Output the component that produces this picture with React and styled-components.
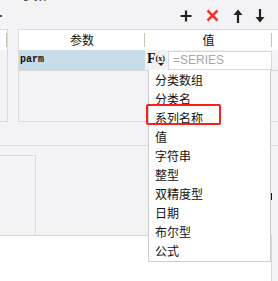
import React from "react";
import styled, { createGlobalStyle } from "styled-components";

const GlobalStyle = createGlobalStyle`
  html, body {
    margin: 0;
    padding: 0;
    background: #f3f3f5;
    font-family: "Noto Sans CJK SC", "Noto Sans", sans-serif;
  }
`;

const Page = styled.div`
  position: relative;
  width: 278px;
  height: 281px;
  overflow: hidden;
  background: #f3f3f5;
  display: flex;
  flex-direction: column;
`;

const TopBar = styled.div`
  height: 29px;
  flex: none;
  display: flex;
  align-items: flex-start;
`;

const EdgeMark = styled.span`
  width: 2px;
  height: 2px;
  margin-top: 15px;
  background: #555;
`;

const CutTitle = styled.span`
  margin: -12px 0 0 20px;
  font-size: 12px;
  line-height: 14px;
  color: #111;
`;

const Toolbar = styled.div`
  margin-left: auto;
  align-self: center;
  display: flex;
  gap: 4px;
  padding: 2px 7px 0 0;
`;

const ToolButton = styled.button`
  width: 22px;
  height: 18px;
  margin-left: ${(p) => (p.$tight ? "-4px" : "0")};
  padding: 0;
  border: none;
  background: transparent;
  display: flex;
  align-items: center;
  justify-content: center;
`;

const TablesRow = styled.div`
  display: flex;
  gap: 10px;
  height: 93px;
  flex: none;
`;

const SideTable = styled.div`
  width: 8px;
  box-sizing: border-box;
  border: 1px solid #dadada;
  border-left: none;
  display: flex;
  flex-direction: column;
`;

const HeaderStrip = styled.div`
  height: 20px;
  background: #fff;
  display: flex;
`;

const HeaderCell = styled.div`
  position: relative;
  width: ${(p) => p.$w}px;
  flex: none;
  font-size: 12px;
  line-height: 20px;
  text-align: center;
  color: #111;
  &::after {
    content: "";
    position: absolute;
    right: 0;
    top: 3px;
    bottom: 3px;
    width: 1px;
    background: #c9c2b4;
  }
`;

const ParamTable = styled.div`
  width: 280px;
  flex: none;
  box-sizing: border-box;
  border: 1px solid #dadada;
  border-right: none;
  display: flex;
  flex-direction: column;
`;

const DataRow = styled.div`
  height: 20px;
  display: flex;
  border-bottom: 1px solid #d6d6d6;
`;

const NameCell = styled.div`
  width: 126px;
  flex: none;
  background: #c8dbe8;
  font-family: "Liberation Mono", "DejaVu Sans Mono", monospace;
  font-size: 10px;
  font-weight: bold;
  line-height: 20px;
  padding-left: 1px;
  box-sizing: border-box;
  color: #111;
`;

const ValueCell = styled.div`
  width: 127px;
  flex: none;
  display: flex;
  align-items: center;
  background: #f2f2f3;
`;

const FxButton = styled.div`
  position: relative;
  width: 23px;
  height: 20px;
  flex: none;
  display: flex;
  align-items: flex-start;
  padding: 1px 0 0 2px;
  box-sizing: border-box;
  font-family: "Liberation Serif", serif;
  color: #111;
  b {
    font-size: 14px;
    line-height: 15px;
  }
  span {
    font-size: 8px;
    line-height: 15px;
    font-weight: bold;
  }
  &::after {
    content: "";
    position: absolute;
    left: 13px;
    bottom: 1px;
    border: 3px solid transparent;
    border-top: 3px solid #222;
  }
`;

const FormulaInput = styled.input`
  width: 104px;
  height: 19px;
  box-sizing: border-box;
  border: 1px solid #d8d8d8;
  background: #fff;
  padding: 0 4px;
  font-family: "Liberation Sans", Arial, sans-serif;
  font-size: 12px;
  outline: none;
  &::placeholder {
    color: #a8a8a8;
  }
`;

const LowerSection = styled.div`
  margin-top: 23px;
  height: 90px;
  flex: none;
  box-sizing: border-box;
  border-top: 1px solid #dcdcdc;
  padding-top: 9px;
  display: flex;
`;

const SmallBox = styled.div`
  width: 36px;
  box-sizing: border-box;
  border-top: 1px solid #dcdcdc;
  border-right: 1px solid #dcdcdc;
`;

const BottomPanel = styled.div`
  flex: 1;
  width: 272px;
  box-sizing: border-box;
  background: #fff;
  border-top: 1px solid #d6d6d6;
  border-right: 1px solid #d6d6d6;
`;

const Dropdown = styled.ul`
  position: absolute;
  left: 148px;
  top: 70px;
  width: 123px;
  margin: 0;
  padding: 0 0 1px;
  list-style: none;
  box-sizing: border-box;
  background: #fff;
  border: 1px solid #cdcdcd;
  border-top: none;
`;

const Option = styled.li`
  height: 19px;
  line-height: 19px;
  padding-left: 6px;
  font-size: 12px;
  color: #111;
  white-space: nowrap;
`;

const Highlight = styled.div`
  position: absolute;
  left: 146px;
  top: 104px;
  width: 75px;
  height: 21px;
  box-sizing: border-box;
  border: 2px solid #fb1c1c;
  border-radius: 2px;
`;

const Caret = styled.div`
  position: absolute;
  left: 271px;
  top: 193px;
  width: 1px;
  height: 7px;
  background: #111;
`;

const options = ["分类数组", "分类名", "系列名称", "值", "字符串", "整型", "双精度型", "日期", "布尔型", "公式"];

const PlusIcon = () => (
  <svg width="12" height="12" viewBox="0 0 12 12">
    <path d="M6 0.5V11.5M0.5 6H11.5" stroke="#222" strokeWidth="2.2" />
  </svg>
);

const CrossIcon = () => (
  <svg width="13" height="13" viewBox="0 0 13 13">
    <path d="M1.5 1.5L11.5 11.5M11.5 1.5L1.5 11.5" stroke="#ec3a36" strokeWidth="2.6" />
  </svg>
);

const ArrowIcon = ({ down }) => (
  <svg width="10" height="14" viewBox="0 0 10 14" style={down ? { transform: "rotate(180deg)" } : undefined}>
    <path d="M5 0.5L9.5 6H0.5Z" fill="#222" />
    <rect x="3.9" y="5" width="2.2" height="9" fill="#222" />
  </svg>
);

export default function App() {
  return (
    <>
      <GlobalStyle />
      <Page>
        <TopBar>
          <EdgeMark />
          <CutTitle>参数</CutTitle>
          <Toolbar>
            <ToolButton><PlusIcon /></ToolButton>
            <ToolButton><CrossIcon /></ToolButton>
            <ToolButton><ArrowIcon /></ToolButton>
            <ToolButton $tight><ArrowIcon down /></ToolButton>
          </Toolbar>
        </TopBar>
        <TablesRow>
          <SideTable>
            <HeaderStrip>
              <HeaderCell $w={7} />
            </HeaderStrip>
          </SideTable>
          <ParamTable>
            <HeaderStrip>
              <HeaderCell $w={126}>参数</HeaderCell>
              <HeaderCell $w={127}>值</HeaderCell>
            </HeaderStrip>
            <DataRow>
              <NameCell>parm</NameCell>
              <ValueCell>
                <FxButton>
                  <b>F</b>
                  <span>(x)</span>
                </FxButton>
                <FormulaInput placeholder="=SERIES" />
              </ValueCell>
            </DataRow>
          </ParamTable>
        </TablesRow>
        <LowerSection>
          <SmallBox />
        </LowerSection>
        <BottomPanel />
        <Dropdown>
          {options.map((o) => (
            <Option key={o}>{o}</Option>
          ))}
        </Dropdown>
        <Highlight />
        <Caret />
      </Page>
    </>
  );
}
